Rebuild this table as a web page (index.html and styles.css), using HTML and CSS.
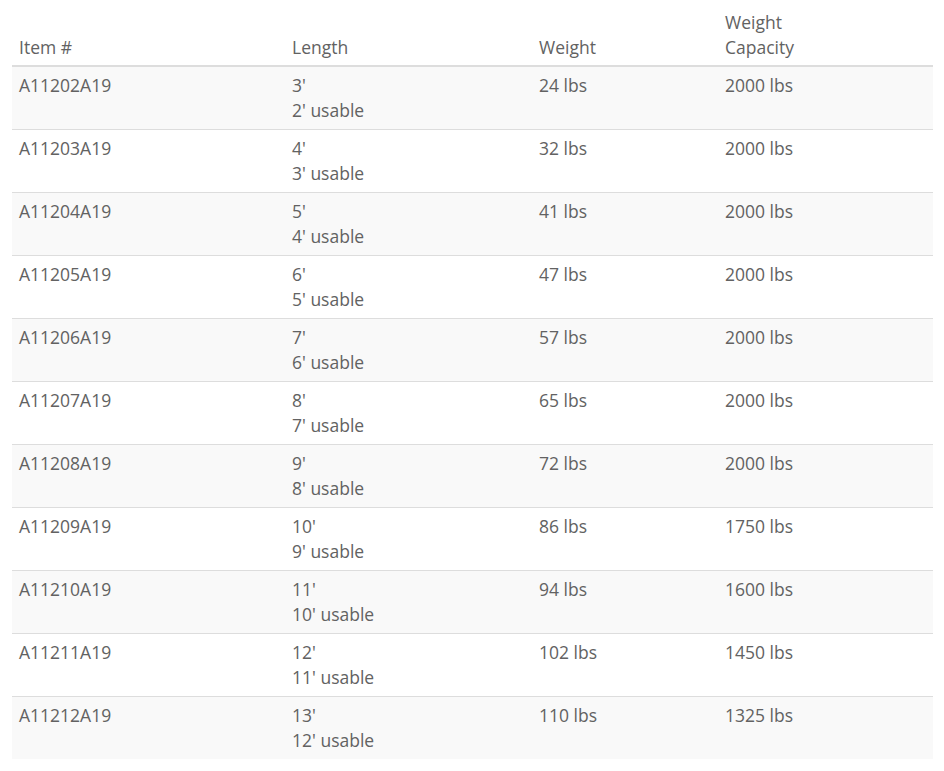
FILE: index.html
```html
<!DOCTYPE html>
<html>
<head>
<meta charset="utf-8">
<link rel="stylesheet" href="styles.css">
</head>
<body>
<table class="spec">
  <colgroup>
    <col class="c1"><col class="c2"><col class="c3"><col class="c4">
  </colgroup>
  <thead>
    <tr><th>Item #</th><th>Length</th><th>Weight</th><th>Weight<br>Capacity</th></tr>
  </thead>
  <tbody>
    <tr><td>A11202A19</td><td>3'<br>2' usable</td><td>24 lbs</td><td>2000 lbs</td></tr>
    <tr><td>A11203A19</td><td>4'<br>3' usable</td><td>32 lbs</td><td>2000 lbs</td></tr>
    <tr><td>A11204A19</td><td>5'<br>4' usable</td><td>41 lbs</td><td>2000 lbs</td></tr>
    <tr><td>A11205A19</td><td>6'<br>5' usable</td><td>47 lbs</td><td>2000 lbs</td></tr>
    <tr><td>A11206A19</td><td>7'<br>6' usable</td><td>57 lbs</td><td>2000 lbs</td></tr>
    <tr><td>A11207A19</td><td>8'<br>7' usable</td><td>65 lbs</td><td>2000 lbs</td></tr>
    <tr><td>A11208A19</td><td>9'<br>8' usable</td><td>72 lbs</td><td>2000 lbs</td></tr>
    <tr><td>A11209A19</td><td>10'<br>9' usable</td><td>86 lbs</td><td>1750 lbs</td></tr>
    <tr><td>A11210A19</td><td>11'<br>10' usable</td><td>94 lbs</td><td>1600 lbs</td></tr>
    <tr><td>A11211A19</td><td>12'<br>11' usable</td><td>102 lbs</td><td>1450 lbs</td></tr>
    <tr><td>A11212A19</td><td>13'<br>12' usable</td><td>110 lbs</td><td>1325 lbs</td></tr>
  </tbody>
</table>
</body>
</html>
```
FILE: styles.css
```css
html, body {
  margin: 0;
  padding: 0;
  background: #fff;
}
body {
  font-family: "Open Sans", "Liberation Sans", sans-serif;
  font-size: 17.5px;
  line-height: 25px;
  color: #626262;
}
.spec {
  margin: 3px 0 0 12px;
  width: 921px;
  border-collapse: collapse;
  table-layout: fixed;
}
.c1 { width: 273px; }
.c2 { width: 247px; }
.c3 { width: 186px; }
.c4 { width: 215px; }
.spec th,
.spec td {
  padding: 6px 7px;
  text-align: left;
  vertical-align: top;
}
.spec th {
  padding: 7px 7px 5px;
  font-weight: normal;
  vertical-align: bottom;
  border-bottom: 2px solid #ddd;
}
.spec td {
  border-top: 1px solid #ddd;
}
.spec tbody tr:first-child td {
  border-top: none;
}
.spec tbody tr:nth-child(odd) {
  background: #f9f9f9;
}
```
